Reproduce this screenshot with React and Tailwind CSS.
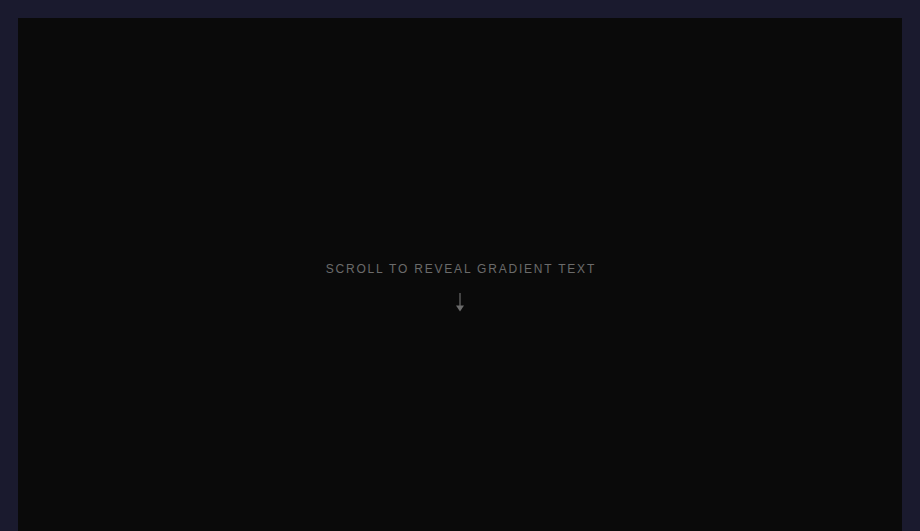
export default function App() {
  return (
    <div className="min-h-screen bg-[#1a1a2e] p-[18px] pb-0" style={{ fontFamily: '"Liberation Sans", Arial, sans-serif' }}>
      <section className="h-screen bg-[#0a0a0a] pt-[6px] flex flex-col items-center justify-center">
        <p className="text-[12px] leading-4 uppercase tracking-[0.15em] pl-[0.15em] text-[#6b6b6b]">Scroll to reveal gradient text</p>
        <svg className="mt-[16px]" width="10" height="19" viewBox="0 0 10 19" fill="#6b6b6b">
          <rect x="4.4" y="0" width="1.2" height="14" />
          <path d="M1 12.5h8L5 18.5z" />
        </svg>
      </section>
    </div>
  );
}
